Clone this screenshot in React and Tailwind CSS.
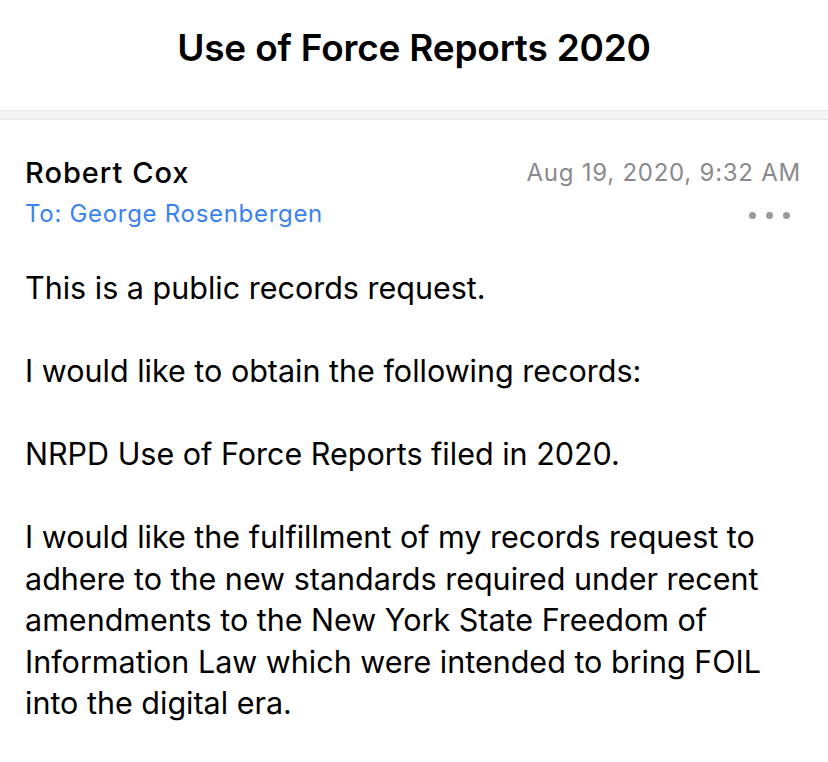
import React from "react";

const paragraphs = [
  "This is a public records request.",
  "I would like to obtain the following records:",
  "NRPD Use of Force Reports filed in 2020.",
  "I would like the fulfillment of my records request to adhere to the new standards required under recent amendments to the New York State Freedom of Information Law which were intended to bring FOIL into the digital era.",
];

export default function App() {
  return (
    <div
      className="w-[828px] h-[762px] bg-white overflow-hidden text-black"
      style={{ fontFamily: "Inter, 'Noto Sans', sans-serif" }}
    >
      <header className="h-[110px] flex items-center justify-center pb-[14px]">
        <h1 className="text-[37px] font-semibold tracking-[-0.2px]">Use of Force Reports 2020</h1>
      </header>
      <div className="h-[10px] bg-[#f5f5f5] border-y border-[#e6e6e6]" />

      <main className="pl-[25px] pr-[27px] pt-[36px]">
        <div className="flex items-start justify-between">
          <div className="text-[29px] font-medium leading-[34px] tracking-[1px]">Robert Cox</div>
          <div className="text-[24px] text-[#8a8a8e] leading-[34px] tracking-[0.75px]">Aug 19, 2020, 9:32 AM</div>
        </div>
        <div className="flex items-center justify-between mt-[9px]">
          <div className="text-[24px] text-[#3a82f0] leading-[30px] tracking-[0.7px]">To: George Rosenbergen</div>
          <div className="flex gap-[10px] pr-[11px] pt-[2px]">
            <span className="w-[7px] h-[7px] rounded-full bg-[#9a9a9e]" />
            <span className="w-[7px] h-[7px] rounded-full bg-[#9a9a9e]" />
            <span className="w-[7px] h-[7px] rounded-full bg-[#9a9a9e]" />
          </div>
        </div>

        <div className="mt-[38px] text-[30.5px] leading-[41.5px] flex flex-col gap-[41.5px]">
          {paragraphs.map((p, i) => (
            <p key={i}>{p}</p>
          ))}
        </div>
      </main>
    </div>
  );
}
